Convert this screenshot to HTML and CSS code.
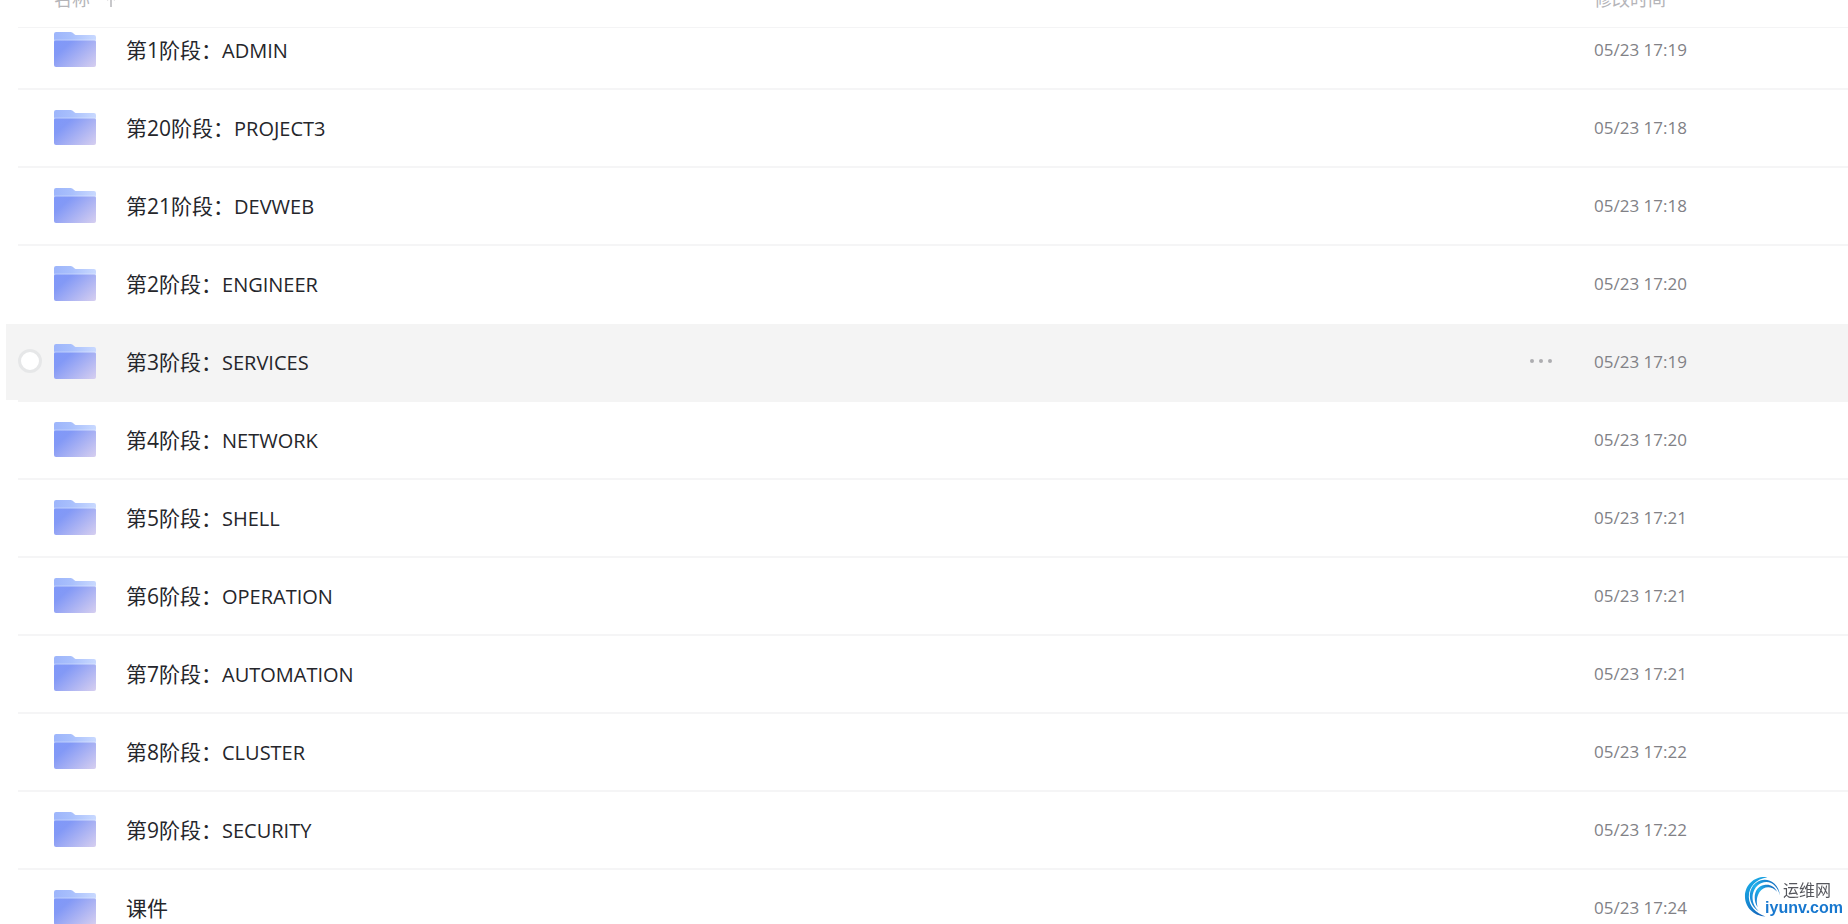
FILE: index.html
```html
<!DOCTYPE html>
<html lang="zh-CN">

<head>
    <meta charset="UTF-8">
    <meta name="viewport" content="width=device-width, initial-scale=1.0">
    <title>文件</title>
    <link rel="stylesheet" href="styles.css">
</head>

<body>
    <svg class="defs" width="0" height="0" aria-hidden="true">
        <defs>
            <linearGradient id="back" x1="0" y1="0" x2="1" y2="0">
                <stop offset="0" stop-color="#9db5fb" />
                <stop offset="0.4" stop-color="#a8bffc" />
                <stop offset="1" stop-color="#c9d9ff" />
            </linearGradient>
            <linearGradient id="front" x1="0" y1="0.2" x2="1" y2="0.9">
                <stop offset="0" stop-color="#8098f8" />
                <stop offset="0.2" stop-color="#8399f6" />
                <stop offset="1" stop-color="#d2ccf0" />
            </linearGradient>
        </defs>
        <symbol id="folder" viewBox="0 0 42 35">
            <path fill="url(#back)" d="M2 0h14.500q1.300 0 2.200.8l2 1.600q.8.600 2 .600H40q2 0 2 2v8H0V2q0-2 2-2z" />
            <path fill="#fff" fill-opacity=".3" d="M0 7.500h42v2H0z" />
            <path fill="url(#front)" d="M1.500 8.500h39q1.500 0 1.500 1.500v23q0 2-2 2H2q-2 0-2-2V10q0-1.500 1.500-1.500z" />
        </symbol>
    </svg>

    <table class="list">
        <colgroup>
            <col class="col-gutter">
            <col class="col-check">
            <col class="col-icon">
            <col>
            <col class="col-more">
            <col class="col-time">
        </colgroup>
        <thead>
            <tr>
                <th></th>
                <th></th>
                <th colspan="2">名称<svg class="sort" viewBox="0 0 12 14" aria-hidden="true"><path d="M6 13V2M2 6l4-4 4 4" /></svg></th>
                <th></th>
                <th>修改时间</th>
            </tr>
        </thead>
        <tbody>
        </tbody>
    </table>

    <div class="logo">
        <svg viewBox="0 0 38 42" aria-hidden="true">
            <defs>
                <linearGradient id="ring" x1="0.2" y1="0" x2="0.6" y2="1">
                    <stop offset="0" stop-color="#1ab0ea" />
                    <stop offset="1" stop-color="#1468bd" />
                </linearGradient>
                <linearGradient id="arc" x1="0" y1="1" x2="1" y2="0.2">
                    <stop offset="0" stop-color="#1673c8" />
                    <stop offset="0.5" stop-color="#22b2ec" />
                    <stop offset="1" stop-color="#1468bd" />
                </linearGradient>
            </defs>
            <path fill="url(#ring)" d="M24 1.200C12 -.5 1 8 1 21C1 32 10 41 22 41.500C12 38 5.500 31 5 22C4.500 11 12 3 24 1.200z" />
            <path fill="url(#arc)" d="M37 20C36 9 28 3.500 21 3.700C11 4 5.500 13 6 21C6.500 28 10 33 15 36C10 31 8 25 9 19C10.500 11 16 6 23 6C30 6.200 35 12 37 20z" />
            <path fill="url(#arc)" d="M34 16C31 10.500 27 8.500 22 9C15 9.500 11 15 11 22C11 26 12 29 14 32C12.500 26 13 21 16 16.500C20 10.500 28 9.500 34 16z" />
        </svg>
        <div class="logo-text">
            <span class="logo-cn">运维网</span>
            <span class="logo-en">iyunv.com</span>
        </div>
    </div>

    <script>
        var files = [
            ['第1阶段：', 'ADMIN', '05/23 17:19'],
            ['第20阶段：', 'PROJECT3', '05/23 17:18'],
            ['第21阶段：', 'DEVWEB', '05/23 17:18'],
            ['第2阶段：', 'ENGINEER', '05/23 17:20'],
            ['第3阶段：', 'SERVICES', '05/23 17:19'],
            ['第4阶段：', 'NETWORK', '05/23 17:20'],
            ['第5阶段：', 'SHELL', '05/23 17:21'],
            ['第6阶段：', 'OPERATION', '05/23 17:21'],
            ['第7阶段：', 'AUTOMATION', '05/23 17:21'],
            ['第8阶段：', 'CLUSTER', '05/23 17:22'],
            ['第9阶段：', 'SECURITY', '05/23 17:22'],
            ['课件', '', '05/23 17:24']
        ];
        var active = 4;
        var html = '';

        for (let i = 0; i < files.length; i++) {
            html += '<tr' + (i === active ? ' class="active"' : '') + '>' +
                '<td class="gutter"></td>' +
                '<td class="check"><input type="checkbox" aria-label="' + files[i][0] + files[i][1] + '"></td>' +
                '<td class="icon"><svg aria-hidden="true"><use href="#folder"/></svg></td>' +
                '<td class="name"><a href="#">' + files[i][0] + '<span class="latin">' + files[i][1] + '</span></a></td>' +
                '<td class="more"><button type="button" aria-label="更多"><i></i><i></i><i></i></button></td>' +
                '<td class="time">' + files[i][2] + '</td>' +
                '</tr>';
        }
        document.querySelector('.list tbody').innerHTML = html;
    </script>
</body>

</html>
```
FILE: styles.css
```css
* {
    margin: 0;
    padding: 0;
    box-sizing: border-box;
}

body {
    height: 100vh;
    overflow: hidden;
    background: #fff;
    color: #25262b;
    font-family: "Open Sans", "Noto Sans CJK SC", sans-serif;
}

.defs {
    position: absolute;
}

.list {
    width: calc(100% - 6px);
    margin: -12px 0 0 6px;
    border-collapse: separate;
    border-spacing: 0;
    table-layout: fixed;
}

.col-gutter {
    width: 12px;
}

.col-check {
    width: 36px;
}

.col-icon {
    width: 72px;
}

.col-more {
    width: 70px;
}

.col-time {
    width: 254px;
}

.list thead {
    position: relative;
}

.list thead::after {
    content: "";
    position: absolute;
    left: 12px;
    right: 0;
    bottom: -16px;
    height: 1px;
    background: #f4f4f5;
}

.list th {
    height: 24px;
    font-size: 18px;
    line-height: 22px;
    font-weight: 400;
    text-align: left;
    vertical-align: top;
    color: #b5b5b9;
}

.list td {
    height: 78px;
    padding-bottom: 2px;
    border-bottom: 2px solid #f5f5f6;
    vertical-align: middle;
}

.list .gutter {
    border-bottom-color: transparent;
    background-clip: padding-box;
}

.list .time {
    font-size: 17px;
    color: #818186;
}

.sort {
    width: 12px;
    height: 14px;
    margin-left: 15px;
    vertical-align: middle;
    fill: none;
    stroke: #c8c8cb;
    stroke-width: 2;
}

.check input {
    display: block;
    width: 24px;
    height: 24px;
    appearance: none;
    border: 3px solid #e6e7e8;
    border-radius: 50%;
    background: #fff;
    visibility: hidden;
}

.icon svg {
    display: block;
    width: 42px;
    height: 35px;
}

.name a {
    font-size: 21px;
    color: inherit;
    text-decoration: none;
}

.name .latin {
    font-size: 20px;
}

.more button {
    display: flex;
    gap: 5px;
    padding: 6px;
    border: 0;
    background: none;
    visibility: hidden;
}

.more i {
    width: 4px;
    height: 4px;
    border-radius: 50%;
    background: #adadb0;
}

.active td {
    background: #f4f4f4;
    border-bottom-color: #f4f4f4;
}

.list .active .gutter {
    border-bottom-color: transparent;
}

.list tr:has(+ .active) td {
    border-bottom-color: transparent;
}

.active input,
.active .more button {
    visibility: visible;
}

.logo {
    position: fixed;
    right: 5px;
    bottom: 7px;
    display: flex;
    align-items: flex-end;
}

.logo svg {
    width: 37px;
    height: 41px;
    margin-right: -16px;
}

.logo-text {
    display: flex;
    flex-direction: column;
}

.logo-cn {
    margin-left: 18px;
    font-size: 16px;
    line-height: 18px;
    color: #55565c;
}

.logo-en {
    font-family: "Liberation Sans", sans-serif;
    font-size: 16px;
    line-height: 18px;
    font-weight: 700;
    color: #1878cf;
}
```
